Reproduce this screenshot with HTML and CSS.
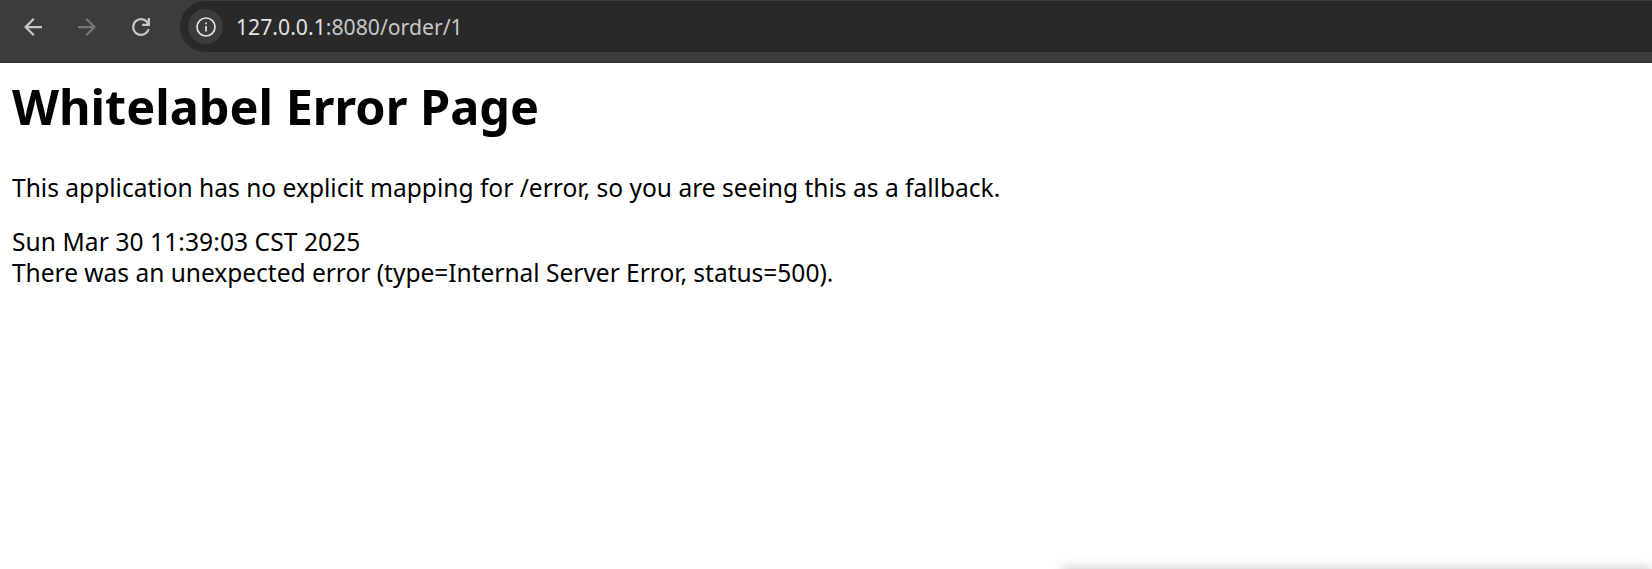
FILE: index.html
```html
<!DOCTYPE html>
<html lang="en">
<head>
<meta charset="utf-8">
<title>Whitelabel Error Page</title>
<link rel="stylesheet" href="styles.css">
</head>
<body>
<header class="toolbar">
  <div class="nav">
    <svg class="nav-icon" viewBox="1.330 1.330 21.330 21.330"><path d="m7.825 13 5.600 5.600L12 20l-8-8 8-8 1.425 1.400-5.600 5.600H20v2H7.825Z"/></svg>
    <svg class="nav-icon nav-icon-off" viewBox="1.330 1.330 21.330 21.330"><path d="M16.175 13H4v-2h12.175l-5.600-5.600L12 4l8 8-8 8-1.425-1.400 5.600-5.600Z"/></svg>
    <svg class="nav-icon" viewBox="1.330 1.330 21.330 21.330"><path d="M12 20q-3.350 0-5.675-2.325Q4 15.350 4 12q0-3.350 2.325-5.675Q8.650 4 12 4q1.725 0 3.300.712 1.575.713 2.700 2.038V4h2v7h-7V9h4.200q-.8-1.400-2.187-2.200Q13.625 6 12 6 9.500 6 7.750 7.750T6 12q0 2.500 1.750 4.250T12 18q1.925 0 3.475-1.100T17.650 14h2.100q-.7 2.650-2.850 4.325Q14.750 20 12 20Z"/></svg>
  </div>
  <div class="omnibox">
    <div class="site-info">
      <svg class="info-icon" viewBox="0 0 20 20"><circle cx="10" cy="10" r="9"/><path d="M10 9v5.400M10 5.400v1.800"/></svg>
    </div>
    <div class="url"><span class="host">127.0.0.1</span>:8080/order/1</div>
  </div>
</header>
<main class="page">
  <h1>Whitelabel Error Page</h1>
  <p>This application has no explicit mapping for /error, so you are seeing this as a fallback.</p>
  <div class="when">Sun Mar 30 11:39:03 CST 2025</div>
  <div class="detail">There was an unexpected error (type=Internal Server Error, status=500).</div>
</main>
<div class="edge-shadow"></div>
</body>
</html>
```
FILE: styles.css
```css
html, body {
  margin: 0;
  height: 100%;
  overflow: hidden;
  background: #fff;
}
body {
  font-family: "Noto Sans", "Open Sans", sans-serif;
  color: #000;
}
.toolbar {
  height: 63px;
  box-sizing: border-box;
  display: flex;
  align-items: flex-start;
  padding-top: 1px;
  background: #3c3c3c;
  border-bottom: 2px solid #343434;
}
.nav {
  width: 180px;
  height: 51px;
  padding-left: 21px;
  box-sizing: border-box;
  display: flex;
  align-items: center;
  gap: 30px;
  flex: none;
}
.nav-icon {
  width: 24px;
  height: 24px;
  fill: #c7c7c7;
}
.nav-icon-off { fill: #757575; }
.omnibox {
  flex: 1;
  height: 51px;
  display: flex;
  align-items: center;
  padding-left: 8px;
  background: #292929;
  border-radius: 25.500px 0 0 25.500px;
}
.site-info {
  width: 35px;
  height: 35px;
  border-radius: 50%;
  background: #3c3c3c;
  display: flex;
  align-items: center;
  justify-content: center;
}
.info-icon {
  width: 20px;
  height: 20px;
  fill: none;
  stroke: #e3e3e3;
  stroke-width: 1.700;
}
.url {
  margin-left: 13px;
  font-size: 21.200px;
  color: #c7c7c7;
  white-space: nowrap;
}
.host { color: #e3e3e3; }
.page {
  padding: 0 12px;
  font-size: 24.550px;
  line-height: 31.500px;
}
h1 {
  margin: 0 0 34px;
  padding-top: 11px;
  font-size: 48.600px;
  line-height: 64px;
  font-weight: 700;
}
p { margin: 0 0 22px; }
.when { letter-spacing: .08px; }
.detail { letter-spacing: -.03px; }
.edge-shadow {
  position: fixed;
  left: 1062px;
  right: 0;
  bottom: -8px;
  height: 8px;
  box-shadow: 0 0 12px rgba(0, 0, 0, .28);
}
```
